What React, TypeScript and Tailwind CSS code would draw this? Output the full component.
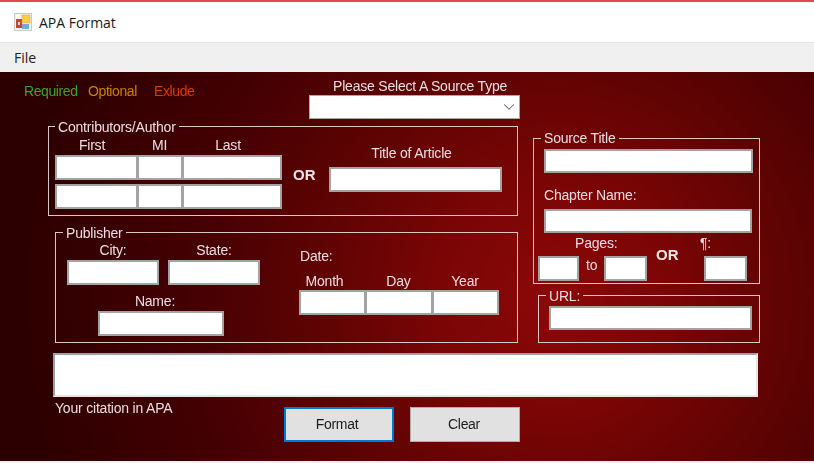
import { ChevronDown } from 'lucide-react'
import type { ReactNode } from 'react'

const font = "font-['Liberation_Sans',Arial,sans-serif]"

function Input({ className = '' }: { className?: string }) {
  return <div className={`bg-white border-2 border-[#a3a3a3] box-border ${className}`} />
}

function Label({ children, className = '' }: { children: ReactNode; className?: string }) {
  return <div className={`h-4 leading-4 text-[14px] tracking-[-0.2px] text-[#ecdde2] whitespace-nowrap ${className}`}>{children}</div>
}

function Group({
  title,
  className,
  legendClass = 'ml-[7px] relative top-px',
  children,
}: {
  title: string
  className: string
  legendClass?: string
  children: ReactNode
}) {
  return (
    <fieldset className={`border border-[#d9c6c6] box-border min-w-0 ${className}`}>
      <legend className={`px-[3px] h-4 leading-4 text-[14px] tracking-[-0.2px] text-[#ecdde2] whitespace-nowrap ${legendClass}`}>{title}</legend>
      <div className="pt-px">{children}</div>
    </fieldset>
  )
}

function AppIcon() {
  return (
    <svg width="18" height="18" viewBox="0 0 18 18" className="mr-[7px]">
      <rect x="0" y="0" width="18" height="18" fill="#c9c9c9" />
      <rect x="1" y="1" width="16" height="16" fill="#f4f4f4" />
      <rect x="2" y="6" width="6" height="9" fill="#c9453c" />
      <rect x="4" y="9" width="2" height="3" fill="#f3d0c8" />
      <rect x="8" y="2" width="8" height="8" fill="#f5cf4e" stroke="#d9a520" strokeWidth="0.5" />
      <rect x="8" y="11" width="7" height="5" fill="#7ba7e0" />
      <rect x="2" y="2" width="3" height="3" fill="#ffffff" />
    </svg>
  )
}

export default function App() {
  return (
    <div className={`w-[814px] h-[463px] overflow-hidden bg-[#f0f0f0] ${font}`}>
      <div className="h-[43px] bg-white border-t-2 border-[#dc4a52] border-b border-b-[#e2e2e2] box-border flex items-center pl-[14px]">
        <AppIcon />
        <span className="font-['Open_Sans',sans-serif] text-[14px] text-[#1a1a1a]">APA Format</span>
      </div>
      <div className="h-[29px] bg-[#f0f0f0] flex items-center pl-[14px]">
        <span className="font-['Open_Sans',sans-serif] text-[14px] text-[#222222]">File</span>
      </div>
      <div className="h-[389px] bg-[radial-gradient(circle_at_555px_225px,#8c0808_0%,#7a0505_20%,#5e0303_40%,#430003_62%,#2c0000_90%)] blur-[0.4px] flex flex-col">
        {/* legend + source type */}
        <div className="h-[46px] flex shrink-0">
          <div className="w-[309px] shrink-0 pt-[11px] pl-[24px] flex items-start text-[14px] tracking-[-0.4px] leading-4">
            <span className="text-[#3ba32a] w-[64px]">Required</span>
            <span className="text-[#c98300] w-[66px]">Optional</span>
            <span className="text-[#d93c00]">Exlude</span>
          </div>
          <div className="w-[211px] pt-[6px]">
            <Label className="pl-6">Please Select A Source Type</Label>
            <div className="mt-px h-6 bg-white border border-[#a8a8a8] box-border flex items-center justify-end pr-px">
              <ChevronDown size={18} strokeWidth={1.4} className="text-[#666666]" />
            </div>
          </div>
        </div>

        {/* form columns */}
        <div className="flex shrink-0 h-[225px]">
          <div className="ml-[48px] w-[470px] shrink-0">
            <Group title="Contributors/Author" legendClass="ml-[6px] relative top-px" className="h-[98px]">
              <div className="flex">
                <div className="ml-[6px] w-[227px] shrink-0">
                  <div className="flex h-5 items-center text-center">
                    <Label className="w-[82px] pr-2">First</Label>
                    <Label className="w-[45px]">MI</Label>
                    <Label className="w-[100px] pr-2">Last</Label>
                  </div>
                  <div className="flex">
                    <Input className="w-[83px] h-[25px]" />
                    <Input className="w-[46px] h-[25px] -ml-[1px]" />
                    <Input className="w-[100px] h-[25px] -ml-[1px]" />
                  </div>
                  <div className="flex mt-[4px]">
                    <Input className="w-[83px] h-[25px]" />
                    <Input className="w-[46px] h-[25px] -ml-[1px]" />
                    <Input className="w-[100px] h-[25px] -ml-[1px]" />
                  </div>
                </div>
                <div className="ml-[11px] mt-[32px] w-[36px] shrink-0 h-4 leading-4 text-[15px] font-bold text-[#f2e6e6]">OR</div>
                <div className="w-[173px] mt-[10px] text-center">
                  <Label className="pr-2">Title of Article</Label>
                  <Input className="mt-[6px] w-[173px] h-[25px]" />
                </div>
              </div>
            </Group>

            <Group title="Publisher" className="mt-[8px] ml-[7px] w-[463px] h-[119px]">
              <div className="flex">
                <div className="ml-[11px] w-[232px] shrink-0 pt-px">
                  <div className="flex">
                    <div className="w-[92px] text-center">
                      <Label>City:</Label>
                      <Input className="mt-[2px] h-[25px]" />
                    </div>
                    <div className="ml-[9px] w-[92px] text-center">
                      <Label>State:</Label>
                      <Input className="mt-[2px] h-[25px]" />
                    </div>
                  </div>
                  <div className="ml-[31px] mt-[8px] w-[126px] text-center">
                    <Label className="pr-3">Name:</Label>
                    <Input className="mt-[2px] h-[25px]" />
                  </div>
                </div>
                <div className="w-[200px] mt-[7px]">
                  <Label className="ml-px">Date:</Label>
                  <div className="flex mt-[9px] text-center">
                    <Label className="w-[66px] pr-[15px]">Month</Label>
                    <Label className="w-[67px]">Day</Label>
                    <Label className="w-[66px]">Year</Label>
                  </div>
                  <div className="flex mt-px">
                    <Input className="w-[67px] h-[25px]" />
                    <Input className="w-[68px] h-[25px] -ml-[1px]" />
                    <Input className="w-[67px] h-[25px] -ml-[1px]" />
                  </div>
                </div>
              </div>
            </Group>
          </div>

          <div className="ml-[15px] w-[227px] shrink-0 pt-[12px]">
            <Group title="Source Title" legendClass="ml-[7px]" className="h-[154px]">
              <Input className="mt-[2px] ml-[10px] w-[209px] h-[24px]" />
              <Label className="mt-[14px] ml-[10px]">Chapter Name:</Label>
              <Input className="mt-[6px] ml-[10px] w-[208px] h-[24px]" />
              <div className="flex mt-[2px]">
                <Label className="ml-[41px] w-[125px]">Pages:</Label>
                <Label>¶:</Label>
              </div>
              <div className="flex mt-[5px] ml-[4px] items-start">
                <Input className="w-[41px] h-[25px]" />
                <Label className="ml-[7px] w-[12px] mt-px">to</Label>
                <Input className="ml-[6px] w-[43px] h-[25px]" />
                <div className="ml-[9px] w-[23px] -mt-[9px] h-4 leading-4 text-[15px] font-bold text-[#f2e6e6]">OR</div>
                <Input className="ml-[25px] w-[43px] h-[25px]" />
              </div>
            </Group>
            <Group title="URL:" className="mt-[3px] ml-[5px] w-[222px] h-[56px]">
              <Input className="mt-[2px] ml-[10px] w-[203px] h-[24px]" />
            </Group>
          </div>
        </div>

        {/* citation output */}
        <div className="mt-[10px] ml-[53px] w-[705px] h-[44px] shrink-0 bg-white border-2 border-[#a0a0a0] border-r-[#e6e6e6] border-b-[#e6e6e6] box-border" />

        <div className="flex ml-[55px] items-start">
          <Label className="w-[229px] mt-[3px]">Your citation in APA</Label>
          <button className="mt-[10px] w-[110px] h-[35px] pr-1 bg-[#e1e1e1] border-2 border-[#0078d7] box-border text-[14px] tracking-[-0.3px] text-[#1c1c1c]">Format</button>
          <button className="mt-[10px] ml-[16px] w-[110px] h-[35px] pr-0.5 bg-[#e1e1e1] border border-[#adadad] box-border text-[14px] tracking-[-0.3px] text-[#1c1c1c]">Clear</button>
        </div>
      </div>
    </div>
  )
}
